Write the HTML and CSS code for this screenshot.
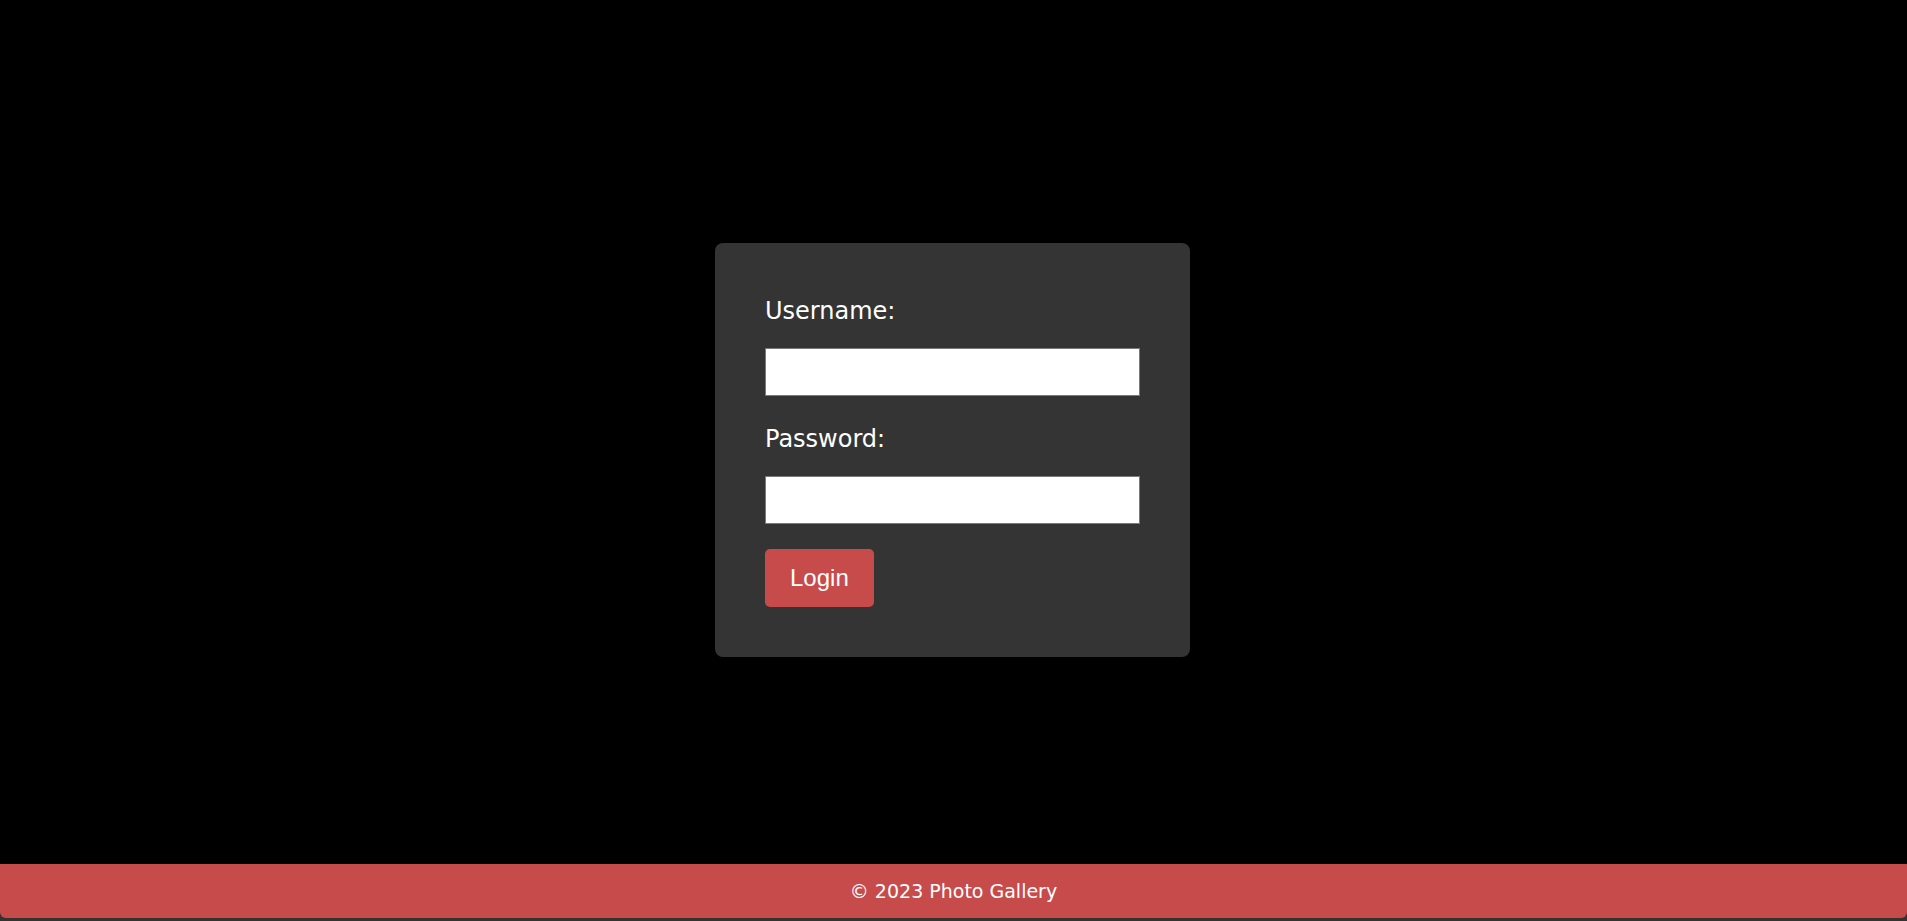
FILE: index.html
```html
<!DOCTYPE html>
<html lang="en">
<head>
<meta charset="utf-8">
<title>Photo Gallery - Login</title>
<link rel="stylesheet" href="styles.css">
</head>
<body>
<main class="main">
  <form class="login-card" onsubmit="return false;">
    <label class="field-label" for="username">Username:</label>
    <input class="field-input" type="text" id="username" name="username">
    <label class="field-label" for="password">Password:</label>
    <input class="field-input" type="password" id="password" name="password">
    <button class="login-btn" type="submit">Login</button>
  </form>
</main>
<footer class="footer">© 2023 Photo Gallery</footer>
</body>
</html>
```

FILE: styles.css
```css
html, body {
  margin: 0;
  padding: 0;
}
body {
  background: #333333;
  font-family: "DejaVu Sans", "Open Sans", sans-serif;
  color: #ffffff;
  min-height: 100vh;
  display: flex;
  flex-direction: column;
  padding-bottom: 3px;
  box-sizing: border-box;
}
.main {
  flex: 1;
  background: #000000;
  display: flex;
  justify-content: center;
  align-items: center;
  padding-top: 35px;
  padding-right: 2px;
}
.login-card {
  width: 475px;
  box-sizing: border-box;
  padding: 50px;
  background: #343434;
  border-radius: 8px;
  display: flex;
  flex-direction: column;
  align-items: flex-start;
}
.field-label {
  display: block;
  font-size: 24px;
  line-height: 36px;
  margin-bottom: 19px;
  color: #ffffff;
}
.field-input {
  width: 100%;
  height: 48px;
  box-sizing: border-box;
  border: 1px solid #7a7a7a;
  background: #ffffff;
  margin: 0 0 25px 0;
  padding: 0 10px;
  font-size: 16px;
}
.login-btn {
  font-family: "Liberation Sans", Arial, sans-serif;
  font-size: 24px;
  line-height: 28px;
  padding: 15px 25px;
  background: #c84b4c;
  color: #ffffff;
  border: none;
  border-radius: 5px;
  cursor: pointer;
}
.footer {
  height: 54px;
  background: #c84b4c;
  border-radius: 0 0 6px 6px;
  display: flex;
  align-items: center;
  justify-content: center;
  font-size: 19px;
  color: #ffffff;
}
```
